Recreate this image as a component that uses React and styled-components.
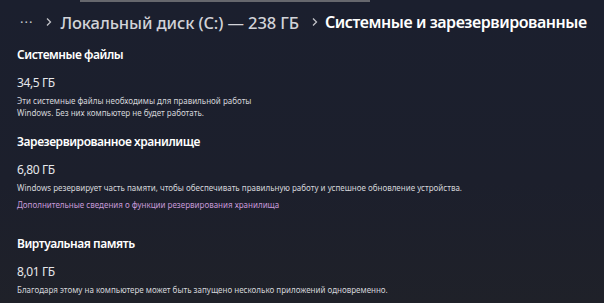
import React from "react";
import styled, { createGlobalStyle } from "styled-components";

const Global = createGlobalStyle`
  html, body {
    margin: 0;
    padding: 0;
    width: 604px;
    height: 303px;
    overflow: hidden;
    background: #1c1f2c;
  }
  body {
    font-family: "Noto Sans", "Open Sans", sans-serif;
    color: #ffffff;
  }
`;

const Page = styled.div`
  width: 604px;
  height: 303px;
  background: linear-gradient(180deg, #1b1f2e 0%, #1c1f2c 60%, #1f2129 100%);
  overflow: hidden;
`;

const ScrollEdge = styled.div`
  height: 2px;
  width: 290px;
  margin-left: 80px;
  background: #66676d;
`;

const Breadcrumb = styled.div`
  display: flex;
  align-items: center;
  height: 40px;
  padding-left: 20px;
  white-space: nowrap;
`;

const Dots = styled.span`
  color: #c8c9ce;
  font-size: 13px;
  letter-spacing: 1px;
  margin-right: 12px;
`;

const Chevron = styled.span`
  color: #c0c1c6;
  display: inline-flex;
  margin: ${(p) => (p.$wide ? "0 6px 0 12px" : "0 7px 0 0")};
`;

const Crumb = styled.span`
  color: ${(p) => (p.$current ? "#ffffff" : "#d2d3d8")};
  font-weight: ${(p) => (p.$current ? 600 : 500)};
  font-size: ${(p) => (p.$current ? 16 : 16.5)}px;
  letter-spacing: ${(p) => (p.$current ? -0.45 : -0.1)}px;
`;

const Content = styled.div`
  padding: 5px 0 0 17px;
  display: flex;
  flex-direction: column;
`;

const Section = styled.section`
  display: flex;
  flex-direction: column;
  margin-bottom: ${(p) => p.$gap || 15}px;
`;

const Heading = styled.h3`
  margin: 0 0 11px;
  font-size: 12px;
  font-weight: 600;
  letter-spacing: -0.45px;
  color: #ffffff;
  line-height: 16px;
`;

const Size = styled.div`
  font-size: 12px;
  letter-spacing: -0.4px;
  color: #e6e7eb;
  line-height: 18px;
  margin-bottom: 3px;
`;

const Text = styled.div`
  font-size: 8px;
  line-height: 12px;
  color: #d4d5da;
`;

const Link = styled.a`
  font-size: 8px;
  line-height: 12px;
  color: #c79ad9;
  margin-top: 5px;
  text-decoration: none;
`;

const ChevronIcon = () => (
  <svg width="8" height="10" viewBox="0 0 8 10">
    <path d="M2 1.5 L5.5 5 L2 8.5" fill="none" stroke="currentColor" strokeWidth="1.3" />
  </svg>
);

export default function App() {
  return (
    <Page>
      <Global />
      <ScrollEdge />
      <Breadcrumb>
        <Dots>···</Dots>
        <Chevron><ChevronIcon /></Chevron>
        <Crumb>Локальный диск (C:) — 238 ГБ</Crumb>
        <Chevron $wide><ChevronIcon /></Chevron>
        <Crumb $current>Системные и зарезервированные</Crumb>
      </Breadcrumb>
      <Content>
        <Section>
          <Heading>Системные файлы</Heading>
          <Size>34,5 ГБ</Size>
          <Text>Эти системные файлы необходимы для правильной работы</Text>
          <Text>Windows. Без них компьютер не будет работать.</Text>
        </Section>
        <Section $gap={25}>
          <Heading>Зарезервированное хранилище</Heading>
          <Size>6,80 ГБ</Size>
          <Text>Windows резервирует часть памяти, чтобы обеспечивать правильную работу и успешное обновление устройства.</Text>
          <Link>Дополнительные сведения о функции резервирования хранилища</Link>
        </Section>
        <Section>
          <Heading>Виртуальная память</Heading>
          <Size>8,01 ГБ</Size>
          <Text>Благодаря этому на компьютере может быть запущено несколько приложений одновременно.</Text>
        </Section>
      </Content>
    </Page>
  );
}
